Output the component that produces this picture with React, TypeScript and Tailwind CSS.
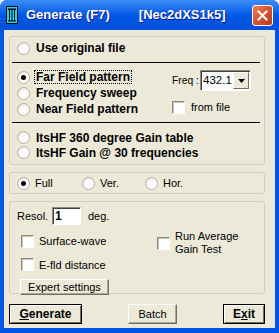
import React from 'react';

const font = "font-['Liberation_Sans',Arial,sans-serif]";

function Radio({ checked = false }: { checked?: boolean }) {
  return (
    <span className="w-[13px] h-[13px] shrink-0 rounded-full border border-[#b4b1a3] bg-[radial-gradient(circle_at_65%_65%,#ffffff_45%,#d6d3c6)] flex items-center justify-center">
      {checked && <span className="w-[5px] h-[5px] rounded-full bg-black" />}
    </span>
  );
}

function Check() {
  return (
    <span className="w-[13px] h-[13px] shrink-0 bg-white border border-t-[#8c8a7f] border-l-[#8c8a7f] border-r-white border-b-white shadow-[inset_1px_1px_0_#c9c6b8]" />
  );
}

function Line() {
  return <div className="h-px bg-black ml-[2px] mr-[4px]" />;
}

export default function App() {
  return (
    <div className={`w-[279px] h-[333px] flex flex-col rounded-t-[7px] overflow-hidden bg-[#0054e3] ${font}`}>
      {/* title bar */}
      <div className="h-[30px] shrink-0 flex items-center pl-[6px] pr-[6px] bg-gradient-to-b from-[#3b8cf7] via-[#0058e6] to-[#0050da]">
        <svg width="12" height="18" viewBox="0 0 12 18" className="shrink-0">
          <rect x="0.5" y="0.5" width="11" height="17" fill="#22d8ee" stroke="#000" />
          <rect x="2" y="2.5" width="8" height="1.5" fill="#000" />
          <rect x="3" y="4" width="1" height="11" fill="#000" />
          <rect x="5.5" y="4" width="1" height="11" fill="#000" />
          <rect x="8" y="4" width="1" height="11" fill="#000" />
          <rect x="2" y="14.5" width="8" height="1" fill="#000" />
        </svg>
        <span className="ml-[8px] text-white font-bold text-[13px] whitespace-nowrap [text-shadow:1px_1px_#0a1a8c]">Generate (F7)</span>
        <span className="ml-[29px] text-white font-bold text-[13px] whitespace-nowrap [text-shadow:1px_1px_#0a1a8c]">[Nec2dXS1k5]</span>
        <button className="ml-auto w-[21px] h-[21px] shrink-0 rounded-[3px] border border-white bg-gradient-to-br from-[#e8805f] via-[#d9532f] to-[#b83a18] flex items-center justify-center">
          <svg width="11" height="11" viewBox="0 0 11 11">
            <path d="M1.5 1.5 L9.5 9.5 M9.5 1.5 L1.5 9.5" stroke="#fff" strokeWidth="2" strokeLinecap="square" />
          </svg>
        </button>
      </div>

      {/* body */}
      <div className="flex-1 ml-[4px] mr-[4px] mb-[5px] bg-[#ece9d8] pl-[5px] pr-[10px] pt-[6px] flex flex-col text-black whitespace-nowrap">
        {/* group 1 */}
        <div className="h-[129px] shrink-0 border border-[#d0d0bf] rounded-[3px] flex flex-col pt-[4px]">
          <div className="h-[14px] flex items-center gap-[6px] pl-[7px] text-[12px] font-bold">
            <Radio />
            <span>Use original file</span>
          </div>
          <div className="mt-[7px]">
            <Line />
          </div>
          <div className="mt-[6px] h-[48px] flex">
            <div className="w-[162px] shrink-0 pl-[7px] flex flex-col text-[12px] font-bold">
              <div className="h-[16px] flex items-center gap-[4px]">
                <Radio checked />
                <span className="border border-dotted border-black px-[1px] leading-[12px]">Far Field pattern</span>
              </div>
              <div className="h-[16px] flex items-center gap-[6px]">
                <Radio />
                <span>Frequency sweep</span>
              </div>
              <div className="h-[16px] flex items-center gap-[6px]">
                <Radio />
                <span>Near Field pattern</span>
              </div>
            </div>
            <div className="flex flex-col pt-[1px] text-[11px]">
              <div className="flex items-center">
                <span className="w-[28px] shrink-0 text-[10.3px]">Freq :</span>
                <div className="w-[51px] h-[21px] shrink-0 bg-white border border-t-[#8c8a7f] border-l-[#8c8a7f] border-r-white border-b-white shadow-[inset_1px_1px_0_#404040] flex items-center">
                  <span className="flex-1 pl-[2px] text-[11.5px]">432.1</span>
                  <span className="w-[16px] h-[17px] mr-[1px] bg-[#ece9d8] border border-t-white border-l-white border-r-[#716f64] border-b-[#716f64] flex items-center justify-center">
                    <svg width="7" height="4" viewBox="0 0 7 4">
                      <path d="M0 0 H7 L3.5 4 Z" fill="#000" />
                    </svg>
                  </span>
                </div>
              </div>
              <div className="mt-[8px] flex items-center gap-[6px]">
                <Check />
                <span>from file</span>
              </div>
            </div>
          </div>
          <div className="mt-[5px]">
            <Line />
          </div>
          <div className="mt-[7px] pl-[7px] flex flex-col text-[12px] font-bold">
            <div className="h-[15px] flex items-center gap-[6px]">
              <Radio />
              <span>ItsHF 360 degree Gain table</span>
            </div>
            <div className="h-[15px] flex items-center gap-[6px]">
              <Radio />
              <span>ItsHF Gain @ 30 frequencies</span>
            </div>
          </div>
        </div>

        {/* group 2 */}
        <div className="mt-[7px] h-[22px] shrink-0 border border-[#d0d0bf] rounded-[3px] flex items-center pl-[7px] text-[11px]">
          <div className="w-[65px] flex items-center gap-[5px]">
            <Radio checked />
            <span>Full</span>
          </div>
          <div className="w-[63px] flex items-center gap-[5px]">
            <Radio />
            <span>Ver.</span>
          </div>
          <div className="flex items-center gap-[5px]">
            <Radio />
            <span>Hor.</span>
          </div>
        </div>

        {/* group 3 */}
        <div className="mt-[7px] h-[93px] shrink-0 border border-[#d0d0bf] rounded-[3px] flex flex-col pt-[5px] pl-[7px] text-[11px]">
          <div className="flex items-center">
            <span className="w-[35px]">Resol.</span>
            <div className="w-[29px] h-[18px] bg-white border border-t-[#8c8a7f] border-l-[#8c8a7f] border-r-white border-b-white shadow-[inset_1px_1px_0_#404040] pl-[2px] flex items-center text-[12px] font-bold">
              1
            </div>
            <span className="ml-[7px]">deg.</span>
          </div>
          <div className="flex mt-[4px]">
            <div className="w-[140px] pl-[4px] flex flex-col pt-[4px]">
              <div className="flex items-center gap-[5px]">
                <Check />
                <span>Surface-wave</span>
              </div>
              <div className="mt-[7px] flex items-center gap-[5px]">
                <Check />
                <span>E-fld distance</span>
              </div>
            </div>
            <div className="flex items-center gap-[5px] h-[28px]">
              <Check />
              <span className="leading-[13px]">
                Run Average
                <br />
                Gain Test
              </span>
            </div>
          </div>
          <button className="mt-[6px] ml-[3px] w-[89px] h-[16px] bg-[#ece9d8] border border-t-white border-l-white border-r-[#716f64] border-b-[#716f64] shadow-[inset_-1px_-1px_0_#aca899] text-[11px] flex items-center justify-center">
            Expert settings
          </button>
        </div>

        {/* buttons */}
        <div className="mt-[10px] shrink-0 flex justify-between">
          <button className="w-[73px] h-[20px] bg-[#ece9d8] border border-black shadow-[inset_1px_1px_0_#ffffff,inset_-1px_-1px_0_#716f64] text-[12px] font-bold flex items-center justify-center">
            <span className="underline">G</span>enerate
          </button>
          <button className="w-[49px] h-[20px] bg-[#ece9d8] border border-t-white border-l-white border-r-[#716f64] border-b-[#716f64] shadow-[inset_-1px_-1px_0_#aca899] text-[11px] flex items-center justify-center">
            Batch
          </button>
          <button className="w-[42px] h-[20px] bg-[#ece9d8] border border-black shadow-[inset_1px_1px_0_#ffffff,inset_-1px_-1px_0_#716f64] text-[12px] font-bold flex items-center justify-center">
            E<span className="underline">x</span>it
          </button>
        </div>
      </div>
    </div>
  );
}
